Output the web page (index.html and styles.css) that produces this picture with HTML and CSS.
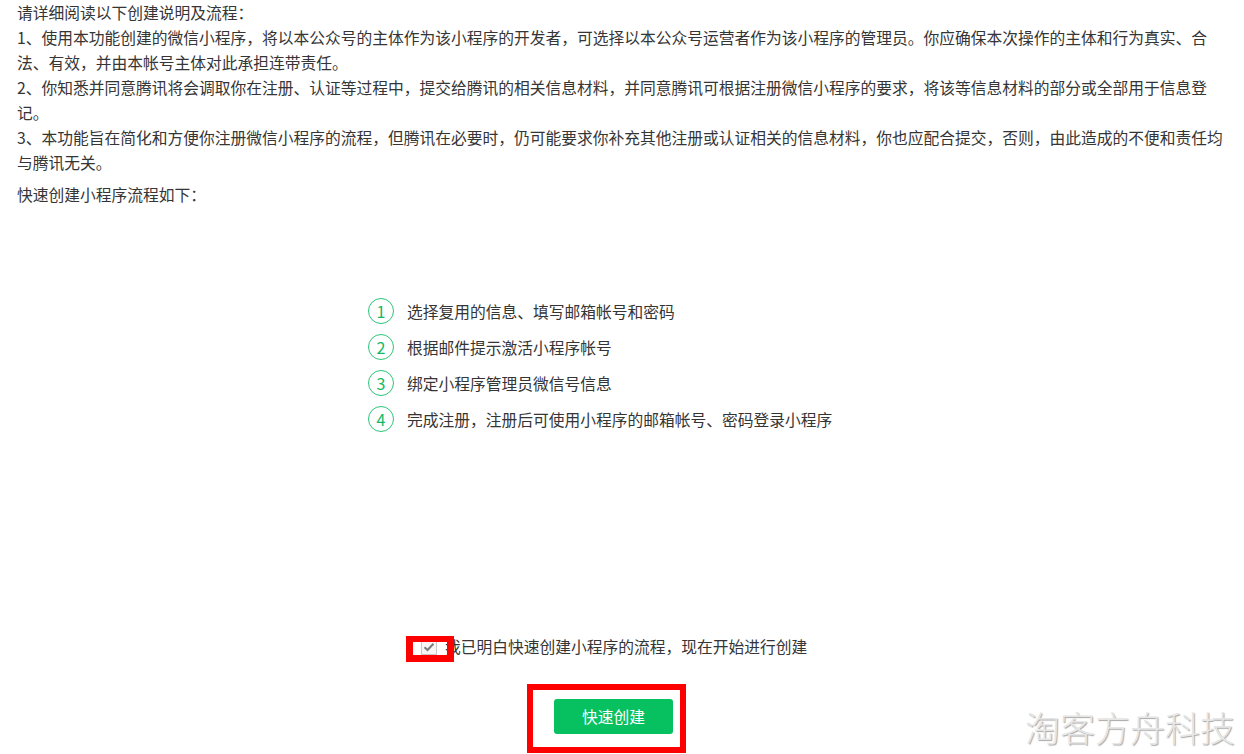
FILE: index.html
```html
<!DOCTYPE html>
<html lang="zh-CN">
<head>
    <meta charset="UTF-8">
    <meta name="viewport" content="width=device-width, initial-scale=1.0">
    <title>快速创建小程序</title>
    <link rel="stylesheet" href="styles.css">
</head>
<body>
    <div class="intro">
        <p class="notice">请详细阅读以下创建说明及流程：<br>
        1、使用本功能创建的微信小程序，将以本公众号的主体作为该小程序的开发者，可选择以本公众号运营者作为该小程序的管理员。你应确保本次操作的主体和行为真实、合法、有效，并由本帐号主体对此承担连带责任。<br>
        2、你知悉并同意腾讯将会调取你在注册、认证等过程中，提交给腾讯的相关信息材料，并同意腾讯可根据注册微信小程序的要求，将该等信息材料的部分或全部用于信息登记。<br>
        3、本功能旨在简化和方便你注册微信小程序的流程，但腾讯在必要时，仍可能要求你补充其他注册或认证相关的信息材料，你也应配合提交，否则，由此造成的不便和责任均与腾讯无关。</p>
        <p class="flow-title">快速创建小程序流程如下：</p>
    </div>

    <ol class="steps">
        <li><span class="step-num">1</span>选择复用的信息、填写邮箱帐号和密码</li>
        <li><span class="step-num">2</span>根据邮件提示激活小程序帐号</li>
        <li><span class="step-num">3</span>绑定小程序管理员微信号信息</li>
        <li><span class="step-num">4</span>完成注册，注册后可使用小程序的邮箱帐号、密码登录小程序</li>
    </ol>

    <label class="agree">
        <span class="check">
            <svg width="12" height="10" viewBox="0 0 12 10"><path d="M1.5 5.2 L4.5 8 L10.5 1.8" fill="none" stroke="#7d7d7d" stroke-width="2"/></svg>
        </span>
        我已明白快速创建小程序的流程，现在开始进行创建
    </label>

    <div class="actions">
        <button class="btn-create">快速创建</button>
    </div>

    <div class="mark mark-check"></div>
    <div class="mark mark-btn"></div>
    <div class="watermark">淘客方舟科技</div>
</body>
</html>
```

FILE: styles.css
```css
body {
    margin: 0;
    padding: 0;
    background: #ffffff;
    color: #353535;
    font-family: "Noto Sans CJK SC", "Noto Sans", sans-serif;
    font-size: 15.75px;
    line-height: 25px;
    position: relative;
    height: 754px;
    overflow: hidden;
}
.intro {
    padding: 0 17px;
    width: 1210px;
}
.intro p {
    margin: 0;
}
.flow-title {
    margin-top: 7px !important;
}
.steps {
    list-style: none;
    margin: 86px 0 0 0;
    padding: 0 0 0 368px;
}
.steps li {
    display: flex;
    align-items: center;
    height: 36px;
}
.step-num {
    width: 24px;
    height: 24px;
    border: 1px solid #2cc47a;
    border-radius: 50%;
    color: #12b866;
    display: flex;
    align-items: center;
    justify-content: center;
    margin-right: 13px;
    font-size: 16px;
}
.agree {
    display: flex;
    align-items: center;
    height: 25px;
    margin-top: 197px;
    padding-left: 421px;
}
.check {
    width: 14px;
    height: 14px;
    border: 1px solid #c9c9c9;
    background: #f7f7f7;
    display: flex;
    align-items: center;
    justify-content: center;
    margin-right: 8px;
}
.actions {
    margin-top: 40px;
    padding-left: 554px;
}
.btn-create {
    width: 119px;
    height: 35px;
    border: none;
    border-radius: 3px;
    background: #07c160;
    color: #ffffff;
    font-family: inherit;
    font-size: 15.75px;
    padding: 0;
    cursor: pointer;
}
.mark {
    position: absolute;
    box-sizing: border-box;
    border-style: solid;
    border-color: #ff0000;
}
.mark-check {
    left: 406px;
    top: 636px;
    width: 48px;
    height: 26px;
    border-width: 6px 7px 7px 7px;
}
.mark-btn {
    left: 527px;
    top: 684px;
    width: 159px;
    height: 69px;
    border-width: 6px;
}
.watermark {
    position: absolute;
    left: 1025px;
    top: 709px;
    font-size: 35px;
    line-height: 35px;
    font-weight: 300;
    color: #e6e6e6;
    text-shadow: 1px 1px 1px rgba(0, 0, 0, 0.35);
    white-space: nowrap;
}
```
